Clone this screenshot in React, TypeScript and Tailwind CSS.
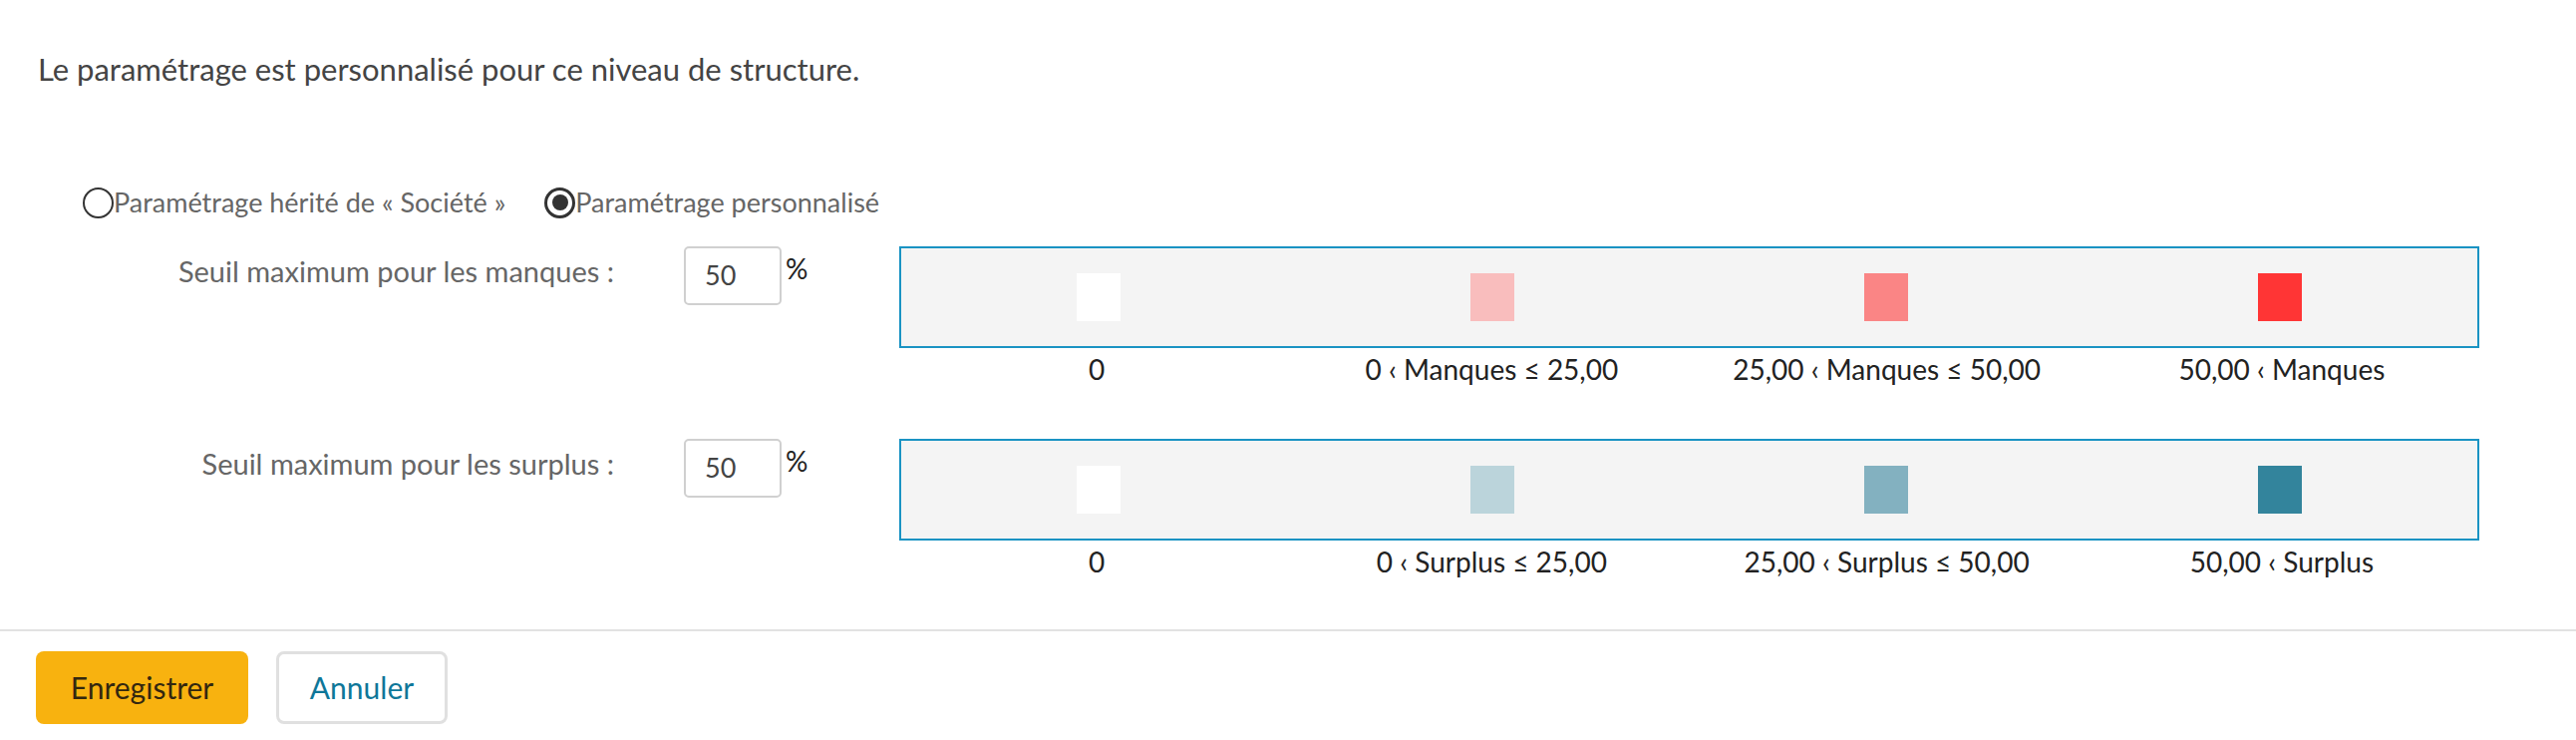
import React from 'react';

type Seuil = {
  label: string;
  valeur: string;
  legendes: string[];
  couleurs: string[];
};

const seuils: Seuil[] = [
  {
    label: 'Seuil maximum pour les manques :',
    valeur: '50',
    legendes: ['0', '0 ‹ Manques ≤ 25,00', '25,00 ‹ Manques ≤ 50,00', '50,00 ‹ Manques'],
    couleurs: ['bg-white', 'bg-[#f9bdbd]', 'bg-[#fa8585]', 'bg-[#ff3535]'],
  },
  {
    label: 'Seuil maximum pour les surplus :',
    valeur: '50',
    legendes: ['0', '0 ‹ Surplus ≤ 25,00', '25,00 ‹ Surplus ≤ 50,00', '50,00 ‹ Surplus'],
    couleurs: ['bg-white', 'bg-[#bbd4db]', 'bg-[#83b1c0]', 'bg-[#33849c]'],
  },
];

const Radio = ({ checked, label }: { checked?: boolean; label: string }) => (
  <label className="flex items-center">
    {checked ? (
      <span className="flex h-[31px] w-[31px] items-center justify-center rounded-full border-[3px] border-[#333]">
        <span className="h-[16px] w-[16px] rounded-full bg-[#333]" />
      </span>
    ) : (
      <span className="h-[31px] w-[31px] rounded-full border-2 border-[#333]" />
    )}
    <span className="text-[27px] leading-[32px] text-[#666]">{label}</span>
  </label>
);

const SeuilRow = ({ seuil }: { seuil: Seuil }) => (
  <div className="flex">
    <div className="w-[616px] pt-[9px] text-right text-[29px] leading-[32px] text-[#666]">
      {seuil.label}
    </div>
    <div className="ml-[70px] flex h-[59px] w-[98px] items-center rounded-[5px] border-2 border-[#d0d0d0] pl-[19px] text-[27px] text-[#444]">
      {seuil.valeur}
    </div>
    <div className="w-[118px] pl-[4px] pt-[6px] text-[28px] leading-[32px] text-[#222]">%</div>
    <div className="mr-[97px] flex-1">
      <div className="grid h-[102px] grid-cols-4 border-2 border-[#1a93c3] bg-[#f4f4f4]">
        {seuil.couleurs.map((c, i) => (
          <div key={i} className="flex items-center justify-center">
            <div className={`h-[48px] w-[44px] ${c}`} />
          </div>
        ))}
      </div>
      <div className="mt-[6px] grid grid-cols-4">
        {seuil.legendes.map((l) => (
          <div key={l} className="text-center text-[28px] leading-[30px] text-[#222]">
            {l}
          </div>
        ))}
      </div>
    </div>
  </div>
);

export default function App() {
  return (
    <div className="h-[742px] w-full bg-white font-['Lato',sans-serif]">
      <p className="pl-[38px] pt-[51px] text-[31px] leading-[36px] text-[#444]">
        Le paramétrage est personnalisé pour ce niveau de structure.
      </p>

      <div className="mt-[100px] flex items-center pl-[83px]">
        <Radio label="Paramétrage hérité de « Société »" />
        <div className="ml-[39px]">
          <Radio checked label="Paramétrage personnalisé" />
        </div>
      </div>

      <div className="mt-[28px] flex flex-col gap-[55px]">
        {seuils.map((s) => (
          <SeuilRow key={s.label} seuil={s} />
        ))}
      </div>

      <div className="mt-[53px] h-[2px] bg-[#e2e2e2]" />

      <div className="flex gap-[28px] pl-[36px] pt-[20px]">
        <button className="h-[73px] w-[213px] rounded-[8px] bg-[#f8b20f] text-[30px] text-[#33270f]">
          Enregistrer
        </button>
        <button className="h-[73px] w-[172px] rounded-[8px] border-[3px] border-[#e0e0e0] bg-white text-[30px] text-[#0f7799]">
          Annuler
        </button>
      </div>
    </div>
  );
}
